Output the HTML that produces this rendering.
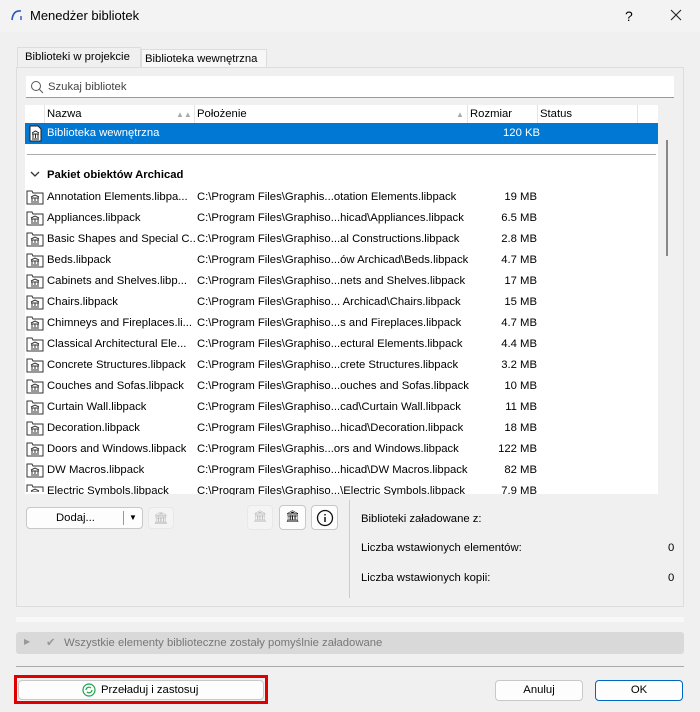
<!DOCTYPE html>
<html><head><style>
*{box-sizing:border-box;margin:0;padding:0}
body{width:700px;height:712px;background:#f0f0f0;font-family:"Liberation Sans",sans-serif;font-size:11.3px;color:#000;position:relative;overflow:hidden}
.a{position:absolute;white-space:nowrap}
.btn{position:absolute;background:#fdfdfd;border:1px solid #c8c8c8;border-radius:4px;text-align:center}
</style></head><body>
<div class="a" style="left:0;top:0;width:700px;height:32px;background:#f3f3f3"></div>
<svg class="a" style="left:10px;top:8px" width="14" height="14"><path d="M2 12 Q3 2 11 3" stroke="#2b56b8" stroke-width="1.6" fill="none"/><path d="M11 8v4" stroke="#2b56b8" stroke-width="1.4"/></svg>
<div class="a" style="left:30px;top:8px;font-size:13px">Menedżer bibliotek</div>
<div class="a" style="left:625px;top:8px;font-size:14px">?</div>
<svg class="a" style="left:670px;top:9px" width="12" height="12"><path d="M1 1L11 11M11 1L1 11" stroke="#222" stroke-width="1.1"/></svg>
<div class="a" style="left:17px;top:47px;width:124px;height:21px;background:#f0f0f0;border:1px solid #ddd;border-bottom:none"></div>
<div class="a" style="left:25px;top:51px">Biblioteki w projekcie</div>
<div class="a" style="left:141px;top:49px;width:126px;height:19px;background:#f7f7f7;border:1px solid #ddd;border-bottom:none"></div>
<div class="a" style="left:145px;top:53px">Biblioteka wewnętrzna</div>
<div class="a" style="left:16px;top:67px;width:668px;height:540px;border:1px solid #ddd"></div>
<div class="a" style="left:26px;top:76px;width:648px;height:22px;background:#fff;border-bottom:1px solid #999"></div>
<svg class="a" style="left:30px;top:80px" width="14" height="14"><circle cx="6" cy="6" r="4.5" stroke="#555" fill="none"/><path d="M9.5 9.5L13 13" stroke="#555"/></svg>
<div class="a" style="left:48px;top:81px;color:#444">Szukaj bibliotek</div>
<div class="a" style="left:25px;top:105px;width:633px;height:389px;background:#fff"></div>
<div class="a" style="left:44px;top:105px;width:1px;height:18px;background:#e4e4e4"></div>
<div class="a" style="left:194px;top:105px;width:1px;height:18px;background:#e4e4e4"></div>
<div class="a" style="left:467px;top:105px;width:1px;height:18px;background:#e4e4e4"></div>
<div class="a" style="left:537px;top:105px;width:1px;height:18px;background:#e4e4e4"></div>
<div class="a" style="left:637px;top:105px;width:1px;height:18px;background:#e4e4e4"></div>
<div class="a" style="left:47px;top:108px">Nazwa</div><div class="a" style="left:176px;top:110px;color:#aaa;font-size:8px">▲▲</div>
<div class="a" style="left:197px;top:108px">Położenie</div><div class="a" style="left:456px;top:110px;color:#aaa;font-size:8px">▲</div>
<div class="a" style="left:470px;top:108px">Rozmiar</div>
<div class="a" style="left:540px;top:108px">Status</div>
<div class="a" style="left:25px;top:123px;width:633px;height:21px;background:#0078d4"></div>
<svg class="a" style="left:29px;top:125px" width="13" height="17"><path d="M1 1h8l3 3v12H1z" fill="#fff" stroke="#222"/><path d="M3 8l3.5-2 3.5 2M3 9h7M4 9v4M6.5 9v4M9 9v4M3 14h7" stroke="#222" fill="none"/></svg>
<div class="a" style="left:47px;top:127px;color:#fff">Biblioteka wewnętrzna</div>
<div class="a" style="left:503px;top:127px;color:#fff">120 KB</div>
<div class="a" style="left:27px;top:154px;width:629px;height:1px;background:#aaa"></div>
<svg class="a" style="left:30px;top:171px" width="10" height="7"><path d="M1 1l4 4 4-4" stroke="#333" fill="none" stroke-width="1.3"/></svg>
<div class="a" style="left:47px;top:169px;font-weight:bold">Pakiet obiektów Archicad</div>
<div class="a" style="left:666px;top:140px;width:2px;height:116px;background:#888"></div>
<div id="rows"></div>
<div class="btn" style="left:26px;top:507px;width:117px;height:22px"><span class="a" style="left:29px;top:4px">Dodaj...</span><span class="a" style="left:96px;top:3px;width:1px;height:14px;background:#999"></span><span class="a" style="left:102px;top:5px;font-size:8px">▼</span></div>
<div class="btn" style="left:148px;top:507px;width:26px;height:22px;background:#f4f4f4;border-color:#e8e8e8;color:#bbb;font-size:12px;line-height:20px">🏛</div>
<div class="btn" style="left:247px;top:505px;width:26px;height:25px;background:#f4f4f4;border-color:#e8e8e8;color:#bbb;line-height:22px">🏛</div>
<div class="btn" style="left:279px;top:505px;width:27px;height:25px;line-height:22px">🏛</div>
<div class="btn" style="left:311px;top:505px;width:27px;height:25px"><svg style="margin-top:3px" width="18" height="18"><circle cx="9" cy="9" r="7.5" stroke="#111" fill="none" stroke-width="1.3"/><path d="M9 8v5M9 5v1.5" stroke="#111" stroke-width="1.5"/></svg></div>
<div class="a" style="left:349px;top:500px;width:1px;height:98px;background:#ccc"></div>
<div class="a" style="left:361px;top:513px">Biblioteki załadowane z:</div>
<div class="a" style="left:361px;top:542px">Liczba wstawionych elementów:</div>
<div class="a" style="left:668px;top:542px">0</div>
<div class="a" style="left:361px;top:572px">Liczba wstawionych kopii:</div>
<div class="a" style="left:668px;top:572px">0</div>
<div class="a" style="left:16px;top:617px;width:668px;height:5px;background:#f8f8f8"></div>
<div class="a" style="left:16px;top:632px;width:668px;height:22px;background:#d9d9d9;border-radius:3px"></div>
<div class="a" style="left:24px;top:637px;font-size:8px;color:#999">▶</div>
<div class="a" style="left:46px;top:636px;color:#999">✔</div>
<div class="a" style="left:64px;top:637px;color:#777">Wszystkie elementy biblioteczne zostały pomyślnie załadowane</div>
<div class="a" style="left:16px;top:666px;width:668px;height:1px;background:#aaa"></div>
<div class="a" style="left:14px;top:675px;width:254px;height:29px;border:3px solid #e00000"></div>
<div class="btn" style="left:18px;top:680px;width:246px;height:20px"></div>
<svg class="a" style="left:82px;top:683px" width="14" height="14"><circle cx="7" cy="7" r="6" stroke="#1fa34a" fill="none" stroke-width="1.2"/><path d="M4 7a3 3 0 0 1 5-2M10 7a3 3 0 0 1-5 2" stroke="#1fa34a" fill="none" stroke-width="1.2"/></svg>
<div class="a" style="left:101px;top:684px">Przeładuj i zastosuj</div>
<div class="btn" style="left:495px;top:680px;width:88px;height:21px"><span style="line-height:19px">Anuluj</span></div>
<div class="btn" style="left:595px;top:680px;width:88px;height:21px;border-color:#0067c0"><span style="line-height:19px">OK</span></div>
<script>
var d=[["Annotation Elements.libpa...","C:\\Program Files\\Graphis...otation Elements.libpack","19 MB"],
["Appliances.libpack","C:\\Program Files\\Graphiso...hicad\\Appliances.libpack","6.5 MB"],
["Basic Shapes and Special C...","C:\\Program Files\\Graphiso...al Constructions.libpack","2.8 MB"],
["Beds.libpack","C:\\Program Files\\Graphiso...ów Archicad\\Beds.libpack","4.7 MB"],
["Cabinets and Shelves.libp...","C:\\Program Files\\Graphiso...nets and Shelves.libpack","17 MB"],
["Chairs.libpack","C:\\Program Files\\Graphiso... Archicad\\Chairs.libpack","15 MB"],
["Chimneys and Fireplaces.li...","C:\\Program Files\\Graphiso...s and Fireplaces.libpack","4.7 MB"],
["Classical Architectural Ele...","C:\\Program Files\\Graphiso...ectural Elements.libpack","4.4 MB"],
["Concrete Structures.libpack","C:\\Program Files\\Graphiso...crete Structures.libpack","3.2 MB"],
["Couches and Sofas.libpack","C:\\Program Files\\Graphiso...ouches and Sofas.libpack","10 MB"],
["Curtain Wall.libpack","C:\\Program Files\\Graphiso...cad\\Curtain Wall.libpack","11 MB"],
["Decoration.libpack","C:\\Program Files\\Graphiso...hicad\\Decoration.libpack","18 MB"],
["Doors and Windows.libpack","C:\\Program Files\\Graphis...ors and Windows.libpack","122 MB"],
["DW Macros.libpack","C:\\Program Files\\Graphiso...hicad\\DW Macros.libpack","82 MB"],
["Electric Symbols.libpack","C:\\Program Files\\Graphiso...\\Electric Symbols.libpack","7.9 MB"]];
var h="";d.forEach(function(r,i){var t=186+i*21;var cl=i==14?'height:10px;overflow:hidden':'';
h+='<svg class="a" style="left:26px;top:'+(t+3)+'px;'+(i==14?'clip-path:inset(0 0 7px 0)':'')+'" width="18" height="16"><path d="M1 2h5l1 2h10v11H1z" fill="#fff" stroke="#333"/><path d="M5 8l4-2 4 2M5 9h8M6 9v3M9 9v3M12 9v3M5 13h8" stroke="#333" fill="none"/></svg>';
h+='<div class="a" style="left:47px;top:'+(t+5)+'px;max-width:148px;overflow:hidden;'+cl+'">'+r[0]+'</div>';
h+='<div class="a" style="left:197px;top:'+(t+5)+'px;'+cl+'">'+r[1]+'</div>';
h+='<div class="a" style="right:'+(700-537)+'px;top:'+(t+5)+'px;'+cl+'">'+r[2]+'</div>';});
document.getElementById("rows").innerHTML=h;
</script>
</body></html>
